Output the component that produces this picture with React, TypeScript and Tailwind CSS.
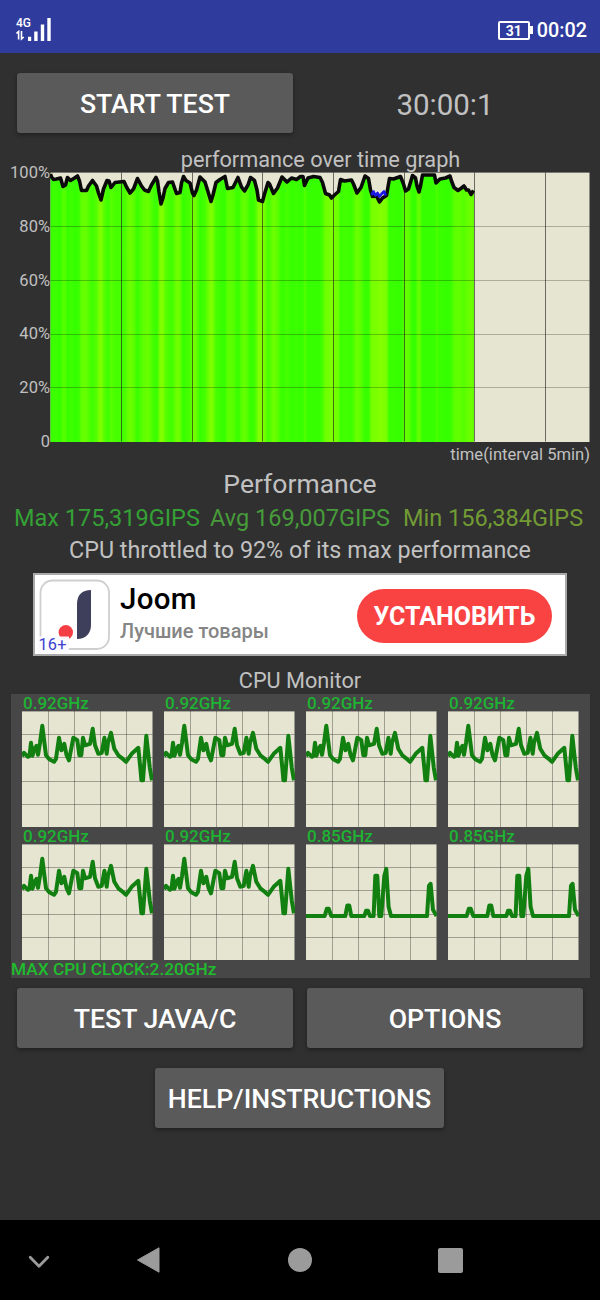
import type { ReactNode } from "react";

type Point = [number, number];

const PERFORMANCE: Point[] = [
  [0, 1], [1, 4], [3, 6.5], [6, 6], [10, 5], [12.5, 13.5], [15, 12], [17, 4.5], [20, 7.5], [24, 5], [27, 3], [29, 8],
  [31, 17.5], [36, 17.5], [38, 13], [42, 7.5], [46, 13], [48, 20], [50.5, 27], [53, 16], [56.5, 7.5], [58.5, 8],
  [60.5, 14.5], [64.5, 9.5], [73.5, 8.5], [76, 14], [79.5, 20], [83, 16], [87, 5.5], [91, 13], [94, 17], [98, 18.5],
  [101, 12], [105.5, 4.5], [107, 8], [108.5, 19], [110.5, 31], [112.5, 25], [114.5, 15.5], [118, 9.5], [122, 9],
  [126, 20.5], [129.5, 19.5], [131, 10], [133, 3.5], [135.5, 7.5], [139.5, 10], [142, 20], [143.5, 22.5], [146, 17],
  [149.5, 4], [154.5, 9], [157, 17], [160.5, 28.5], [162.5, 22], [165.5, 9.5], [169.5, 6.5], [174.5, 3.5],
  [177, 15.5], [182.5, 14.5], [187.5, 4.5], [191, 14], [194, 18], [197.5, 12], [200, 4.5], [204, 7.5], [206.5, 17],
  [208, 27], [212, 28.5], [214, 21], [217.5, 9.5], [219, 11], [223, 20.5], [227, 15], [231.5, 4], [236.5, 9],
  [241, 5], [246, 6.5], [250, 3.5], [252.5, 3.5], [254, 12.5], [257.5, 5], [263, 3.5], [269.5, 4.5], [272, 9.5],
  [275, 20.5], [279, 22], [281, 25], [284, 22], [288, 18.5], [290, 6.5], [294, 8], [301, 7], [303, 11],
  [306.5, 20], [310.5, 14.5], [314.5, 3], [318, 5.5], [320, 17], [322, 23.5], [326, 23], [329, 29], [332, 25],
  [336, 22.5], [339, 5.5], [343, 6], [350, 3.5], [353, 11], [355, 18], [358, 16], [362, 2.5], [365, 5], [366.5, 13],
  [368.5, 19], [370, 13], [372, 2], [384, 2], [385.5, 10], [389.5, 6], [395, 5], [399.5, 3], [401, 8], [403.5, 14.5],
  [407.5, 17.5], [411, 15], [413.5, 13], [416, 17], [418, 17], [420.5, 21.5], [423, 17.5],
];

const BUSY: Point[] = [
  [0, 44.5], [2, 41], [4, 43], [6, 45], [7.5, 44], [9, 31], [10.5, 44], [12.5, 37], [14.5, 34], [16, 43], [18, 31],
  [20.3, 14], [24, 43.5], [27.3, 47.5], [32, 50], [34, 47], [37, 26], [39.5, 38.5], [42.3, 32], [44.5, 43],
  [47, 48.5], [51.3, 26], [55.3, 28.5], [57.3, 43.5], [59.3, 43.5], [61, 26], [63, 33.5], [68, 32], [70.7, 17],
  [73, 33.5], [76.3, 42], [79.7, 41], [82.4, 26], [84.7, 42], [86, 31], [89, 21], [92.3, 37], [96.3, 43.5],
  [99.5, 46], [104, 50], [109.7, 42], [116.3, 36], [118.5, 58], [119.4, 68.5], [121, 68.5], [124.3, 24], [127.8, 56],
  [130, 68.5],
];

const IDLE: Point[] = [
  [0, 71.3], [18.6, 71.3], [20.8, 64], [22.8, 64], [25.3, 71.3], [39.3, 71.3], [41.3, 60.7], [43.3, 60.7],
  [45.3, 71.3], [58.3, 71.3], [60, 66], [62, 66], [64, 71.3], [67.6, 71.3], [69.3, 31], [71.3, 31], [73.3, 71.3],
  [75.3, 71.3], [78.3, 31], [80.3, 24], [82.6, 62], [85, 71.3], [121, 71.3], [123, 41], [124.6, 39], [127, 65],
  [130.6, 71.3],
];

const CORES = [
  { label: "0.92GHz", data: BUSY },
  { label: "0.92GHz", data: BUSY },
  { label: "0.92GHz", data: BUSY },
  { label: "0.92GHz", data: BUSY },
  { label: "0.92GHz", data: BUSY },
  { label: "0.92GHz", data: BUSY },
  { label: "0.85GHz", data: IDLE },
  { label: "0.85GHz", data: IDLE },
];

const toPoints = (data: Point[]) => data.map(([x, y]) => `${x},${y}`).join(" ");

const bandColor = (y: number) => {
  const t = Math.min(1, Math.max(0, (y - 5) / 21));
  return `rgb(${Math.round(54 + t * 78)},255,0)`;
};

function StatusBar() {
  return (
    <header className="flex h-[53px] items-start justify-between bg-[#2f3c9d] pl-4 pr-[13px] text-white">
      <svg className="mt-[17px] h-[25px] w-[36px]" viewBox="0 0 36 25" fill="white">
        <text x="0" y="10" fontSize="12" fontWeight="500" fontFamily="Roboto">4G</text>
        <path d="M12 19.8h3.2v4.2H12zM18.2 14.5h3.4V24h-3.4zM24.8 7.5h3.4V24h-3.4zM31.3 1h3.4v23h-3.4z" />
        <path d="M.4 16.5 2.6 14.6V22.5M5.5 14v8l2.2-2" fill="none" stroke="white" strokeWidth="1.6" />
      </svg>
      <div className="mt-5 flex h-5 items-center">
        <div className="flex h-[19px] w-8 items-center justify-center rounded-[2px] border-2 border-white pt-px text-[14px] leading-none font-bold">
          31
        </div>
        <div className="h-2 w-[3px] bg-white" />
        <span className="mt-[2px] ml-[4px] text-[19.8px] leading-5 font-medium whitespace-nowrap">00:02</span>
      </div>
    </header>
  );
}

function Button({ className, children }: { className: string; children: ReactNode }) {
  return (
    <button
      className={`h-[60px] shrink-0 rounded-[3px] bg-[#5a5a5a] text-[26.7px] leading-[62px] font-medium whitespace-nowrap text-white shadow-[0_2px_4px_rgba(0,0,0,0.35)] ${className}`}
    >
      {children}
    </button>
  );
}

function PerformanceGraph() {
  const line = toPoints(PERFORMANCE);
  return (
    <section className="flex h-[270px] pl-[10px]">
      <div className="flex w-10 flex-col items-end gap-[33.8px] text-[16.5px] leading-5 text-[#c0c0c0]">
        <span className="-mt-[9px]">100%</span>
        <span>80%</span>
        <span>60%</span>
        <span>40%</span>
        <span>20%</span>
        <span>0</span>
      </div>
      <svg className="h-[270px] w-[540px]" viewBox="0 0 540 270">
        <defs>
          <linearGradient id="load" gradientUnits="userSpaceOnUse" x1="0" y1="0" x2="423.5" y2="0">
            {PERFORMANCE.map(([x, y]) => (
              <stop key={x} offset={x / 423.5} stopColor={bandColor(y)} />
            ))}
          </linearGradient>
        </defs>
        <rect x="0.5" y="0.6" width="539" height="269.4" fill="#e6e5d1" />
        <g transform="translate(0.5 0.5)">
          <polygon points={`0,269.5 ${line} 423.5,17.5 423.5,269.5`} fill="url(#load)" />
          <path d="M0 54h539M0 108h539M0 162h539M0 215h539" stroke="#000" strokeOpacity="0.25" />
          <path d="M71 0v269M142 0v269M212 0v269M283 0v269M354 0v269M424 0v269M495 0v269" stroke="#202020" strokeOpacity="0.7" strokeWidth="0.9" />
          <polyline points={line} fill="none" stroke="#0a0a0a" strokeWidth="3.6" strokeLinejoin="round" transform="translate(0 0.5)" />
          <path d="m321 22.5 2-3.5 2 4 2-2.5 2 3.5 2-2.5 2.5-2.5 1.8 4" fill="none" stroke="#1818e8" strokeWidth="2.6" strokeLinejoin="round" />
        </g>
      </svg>
    </section>
  );
}

function CoreGraph({ label, data }: { label: string; data: Point[] }) {
  return (
    <div className="h-[133px]">
      <div className="h-[17px] pl-[1px] text-[17px] leading-[19px] font-medium whitespace-nowrap text-[#1eb332]">{label}</div>
      <svg className="block h-[116px] w-[131px]" viewBox="0 0 131 116">
        <rect y="0.4" width="130.5" height="115.6" fill="#e6e5d1" />
        <path
          d="M26.5 0v116M52.5 0v116M78.5 0v116M104.5 0v116M0 23.5h130.5M0 46.5h130.5M0 70.5h130.5M0 93.5h130.5"
          stroke="#000"
          strokeOpacity="0.35"
          strokeWidth="0.9"
        />
        <polyline points={toPoints(data)} fill="none" stroke="#118011" strokeWidth="4" strokeLinejoin="round" transform="translate(0 0.8)" />
      </svg>
    </div>
  );
}

function AdBanner() {
  return (
    <section className="mx-auto mt-[6px] flex h-[83px] w-[534px] shrink-0 border-2 border-[#a9a9a9] bg-white">
      <svg className="mt-1 ml-[3px] h-[74px] w-[72px] shrink-0" viewBox="0 0 72 74">
        <rect x="2.5" y="1.5" width="68.5" height="68.5" rx="12" fill="#fff" stroke="#cfcfcf" strokeWidth="1.8" />
        <path d="M39 60V25c0-9 5-14 14-14v35c0 8-5 14-14 14Z" fill="#3e3f5b" />
        <circle cx="27.8" cy="53.3" r="7.2" fill="#f53e43" />
        <rect x="0" y="57.5" width="31" height="16.5" fill="#fafaff" fillOpacity="0.95" />
        <text x="0.5" y="70.5" fontFamily="Roboto" fontSize="16.3" letterSpacing="0.2" fill="#3f3fd0">16+</text>
      </svg>
      <div className="ml-[10px] flex w-[237px] flex-col whitespace-nowrap">
        <span className="mt-2 text-[29.5px] leading-8 font-medium tracking-[0.3px] text-black">Joom</span>
        <span className="mt-[4px] text-[20px] leading-6 font-medium text-[#858585]">Лучшие товары</span>
      </div>
      <button className="mt-[14px] h-[54px] w-[195px] rounded-full bg-[#f94343] text-[25px] leading-[56px] font-bold whitespace-nowrap text-white">
        УСТАНОВИТЬ
      </button>
    </section>
  );
}

function NavigationBar() {
  return (
    <nav className="flex h-20 items-center bg-black text-[#9b9b9b]">
      <svg className="ml-[27px] h-6 w-6" viewBox="0 0 24 24" fill="none" stroke="currentColor" strokeWidth="2.8" strokeLinecap="round" strokeLinejoin="round">
        <path d="m3.2 9.2 8.8 9 8.8-9" />
      </svg>
      <svg className="ml-[85px] h-7 w-6" viewBox="0 0 24 28" fill="currentColor" stroke="currentColor" strokeLinejoin="round">
        <path d="M1.5 14 23 1.8v24.4Z" />
      </svg>
      <div className="ml-32 size-6 rounded-full bg-current" />
      <div className="ml-[125.5px] size-[25px] rounded-[2px] bg-current" />
    </nav>
  );
}

export default function App() {
  return (
    <div className="flex h-[1300px] w-[600px] flex-col overflow-hidden bg-[#303030] font-['Roboto',sans-serif] text-[#c1c1c1]">
      <StatusBar />
      <main className="flex h-[1167px] flex-col">
        <div className="mt-5 flex pl-[17px]">
          <Button className="w-[276px]">START TEST</Button>
          <div className="ml-[13px] h-[60px] w-[278px] text-center text-[29.5px] leading-[64px]">30:00:1</div>
        </div>
        <h2 className="mt-[13px] h-[26px] pl-[41px] text-center text-[21.7px] leading-[27px]">performance over time graph</h2>
        <PerformanceGraph />
        <div className="h-6 pr-[10px] text-right text-[16.6px] leading-[26px]">time(interval 5min)</div>
        <h2 className="h-9 text-center text-[26.5px] leading-9">Performance</h2>
        <div className="flex h-8 pl-[14px] text-[23.5px] leading-8 whitespace-nowrap">
          <span className="w-[196px] text-[#35a035]">Max 175,319GIPS</span>
          <span className="w-[193px] text-[#479b3a]">Avg 169,007GIPS</span>
          <span className="text-[#729b34]">Min 156,384GIPS</span>
        </div>
        <p className="h-[33px] text-center text-[23.3px] leading-8">CPU throttled to 92% of its max performance</p>
        <AdBanner />
        <h2 className="mt-[11px] h-[27px] text-center text-[21.7px] leading-7">CPU Monitor</h2>
        <section className="ml-[11px] h-[284px] w-[579px] shrink-0 bg-[#474747]">
          <div className="ml-[11px] grid w-[557px] grid-cols-[repeat(4,131px)] gap-x-[11px]">
            {CORES.map((core, i) => (
              <CoreGraph key={i} {...core} />
            ))}
          </div>
          <div className="h-[18px] text-[17.3px] leading-[19px] font-medium text-[#1fbd2d]">MAX CPU CLOCK:2.20GHz</div>
        </section>
        <div className="mt-[10px] flex gap-[14px] pl-[17px]">
          <Button className="w-[276px]">TEST JAVA/C</Button>
          <Button className="w-[276px]">OPTIONS</Button>
        </div>
        <Button className="mt-5 mr-px w-[289px] self-center">HELP/INSTRUCTIONS</Button>
      </main>
      <NavigationBar />
    </div>
  );
}
